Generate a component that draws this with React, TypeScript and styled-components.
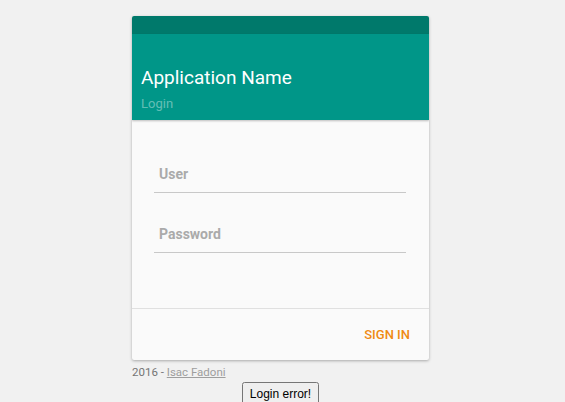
import React from 'react';
import styled, { createGlobalStyle } from 'styled-components';

const GlobalStyle = createGlobalStyle`
  body {
    margin: 0;
    background-color: #f1f1f1;
    font-family: Roboto, "Liberation Sans", Arial, sans-serif;
  }
`;

const Page = styled.div`
  width: 297px;
  margin-left: calc(50% - 150.5px);
  padding-top: 16px;
`;

const Card = styled.div`
  background-color: #fafafa;
  border-radius: 2px;
  overflow: hidden;
  box-shadow: 0 1px 3px rgba(0, 0, 0, 0.3);
`;

const StatusBar = styled.div`
  height: 18px;
  background-color: #00796b;
`;

const Header = styled.div`
  background-color: #009688;
  height: 86px;
  padding: 0 9px 8px;
  box-sizing: border-box;
  display: flex;
  flex-direction: column;
  justify-content: flex-end;
  box-shadow: 0 1px 2px rgba(0, 0, 0, 0.25);
  position: relative;
`;

const Title = styled.h1`
  margin: 0;
  font-size: 19px;
  font-weight: 400;
  color: #fff;
  line-height: 24px;
`;

const Subtitle = styled.div`
  font-size: 13px;
  color: rgba(255, 255, 255, 0.4);
  line-height: 16px;
  margin-top: 6px;
`;

const Body = styled.div`
  padding: 36px 23px 55px 22px;
  display: flex;
  flex-direction: column;
  gap: 23px;
`;

const Input = styled.input`
  height: 37px;
  box-sizing: border-box;
  border: none;
  border-bottom: 1px solid #c8c8c8;
  background: transparent;
  padding: 0 5px;
  font-family: Roboto, "Liberation Sans", Arial, sans-serif;
  font-size: 14px;
  font-weight: 700;
  outline: none;

  &::placeholder {
    color: #aaaaaa;
  }
`;

const Actions = styled.div`
  border-top: 1px solid #e0e0e0;
  height: 51px;
  display: flex;
  align-items: center;
  justify-content: flex-end;
  padding-right: 11px;
`;

const TextButton = styled.button`
  border: none;
  background: transparent;
  color: #ef8a13;
  font-family: Roboto, "Liberation Sans", Arial, sans-serif;
  font-size: 13px;
  font-weight: 500;
  text-transform: uppercase;
  padding: 6px 8px;
  cursor: pointer;
`;

const Credit = styled.div`
  margin-top: 5px;
  font-size: 11.5px;
  color: #757575;
  line-height: 15px;

  a {
    color: #9e9e9e;
  }
`;

const ErrorRow = styled.div`
  text-align: center;
  margin-top: 2px;
`;

const ErrorButton = styled.button`
  font-family: "Liberation Sans", Arial, sans-serif;
  font-size: 12px;
  padding: 3px 6px;
  margin-left: -4px;
`;

export default function App() {
  return (
    <>
      <GlobalStyle />
      <Page>
        <Card>
          <StatusBar />
          <Header>
            <Title>Application Name</Title>
            <Subtitle>Login</Subtitle>
          </Header>
          <Body>
            <Input placeholder="User" />
            <Input type="password" placeholder="Password" />
          </Body>
          <Actions>
            <TextButton>Sign in</TextButton>
          </Actions>
        </Card>
        <Credit>
          2016 - <a href="#">Isac Fadoni</a>
        </Credit>
      </Page>
      <ErrorRow>
        <ErrorButton>Login error!</ErrorButton>
      </ErrorRow>
    </>
  );
}
